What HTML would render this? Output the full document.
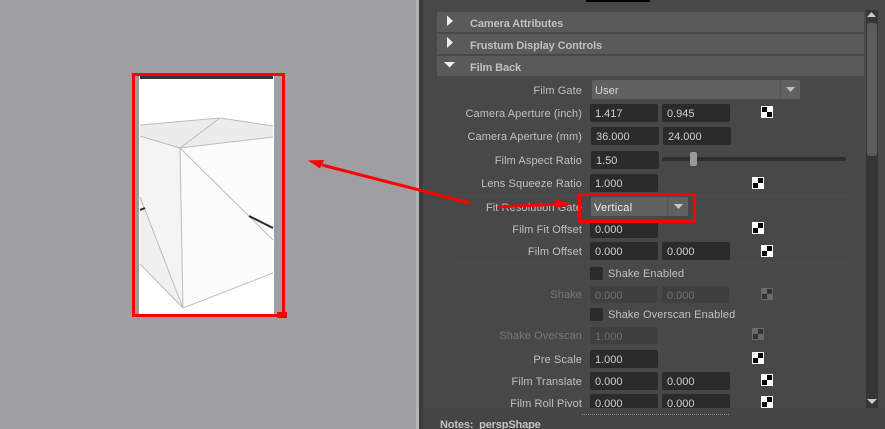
<!DOCTYPE html>
<html><head><meta charset="utf-8"><style>
html,body{margin:0;padding:0;background:#9f9fa1}
#r{position:relative;width:885px;height:429px;overflow:hidden;background:#9f9fa1;font-family:"Liberation Sans",sans-serif;font-size:11px;color:#c4c4c4;filter:blur(.3px)}
#r div{position:absolute;box-sizing:border-box}
.b{left:437px;width:427px;height:20px;background:#5a5a5a;font-weight:bold;line-height:24px;padding-left:33px;color:#c0c0c0;letter-spacing:-.1px}
.l{width:160px;left:422px;text-align:right;height:16px;line-height:18px;letter-spacing:.1px;white-space:nowrap;color:#c0c0c0}
.f{height:18px;width:68px;background:#2b2b2b;border-radius:2px;line-height:21px;padding-left:5px;color:#d0d0d0;letter-spacing:0}
.d{background:#3f3f3f;color:#707070}
.s{height:1px;left:450px;width:400px;background:#4c4c4c}
.c{width:13px;height:13px;background:#2b2b2b;border-radius:2px;left:590px}
.t{left:608px;height:16px;line-height:17px;letter-spacing:.12px;color:#c0c0c0;white-space:nowrap}
</style></head><body><div id="r">
<div style="left:0;top:78px;width:416px;height:1px;background:#a2a2a4"></div>
<div style="left:416px;top:0;width:3px;height:429px;background:#b4b4b4"></div>
<div style="left:419px;top:0;width:466px;height:429px;background:#454545"></div>
<div style="left:419px;top:0;width:4px;height:429px;background:#3c3c3c"></div>
<div style="left:423px;top:0;width:462px;height:429px;background:#484848"></div>
<div style="left:586px;top:0;width:64px;height:2px;background:#000"></div>

<div class="b" style="top:12px">Camera Attributes</div>
<div class="b" style="top:34px">Frustum Display Controls</div>
<div class="b" style="top:56px">Film Back</div>
<svg style="position:absolute;left:0;top:0" width="885" height="429">
<path d="M447 15.500L453 21 447 26z" fill="#eee"/>
<path d="M447 37L453 42.500 447 48z" fill="#eee"/>
<path d="M444 62H455L449.500 67.500z" fill="#eee"/>
</svg>

<div class="l" style="top:82px">Film Gate</div>
<div style="left:592px;top:80px;width:208px;height:19px;background:#616161;border-radius:2px;line-height:23px;padding-left:3px;letter-spacing:.1px;color:#d8d8d8">User</div>
<div style="left:780px;top:80px;width:1px;height:19px;background:#565656"></div>

<div class="l" style="top:105px">Camera Aperture (inch)</div>
<div class="f" style="left:590px;top:104px">1.417</div><div class="f" style="left:662px;top:104px">0.945</div>
<div class="l" style="top:128px">Camera Aperture (mm)</div>
<div class="f" style="left:591px;top:127px">36.000</div><div class="f" style="left:663px;top:127px">24.000</div>
<div class="l" style="top:152px">Film Aspect Ratio</div>
<div class="f" style="left:591px;top:151px">1.50</div>
<div style="left:662px;top:157px;width:184px;height:4px;background:#2e2e2e;border-radius:2px"></div>
<div style="left:690px;top:152px;width:7px;height:14px;background:#9a9a9a;border-radius:2px"></div>
<div class="l" style="top:175px">Lens Squeeze Ratio</div>
<div class="f" style="left:590px;top:174px">1.000</div>
<div class="s" style="top:195px"></div>
<div class="l" style="top:199px">Fit Resolution Gate</div>
<div style="left:591px;top:197px;width:97px;height:19px;background:#616161;border-radius:1px;line-height:23px;padding-left:3px;letter-spacing:.3px;color:#f0f0f0">Vertical</div>
<div style="left:667px;top:197px;width:1px;height:19px;background:#565656"></div>
<div class="l" style="top:221px">Film Fit Offset</div>
<div class="f" style="left:590px;top:220px">0.000</div>
<div class="l" style="top:243px">Film Offset</div>
<div class="f" style="left:590px;top:242px">0.000</div><div class="f" style="left:662px;top:242px">0.000</div>
<div class="s" style="top:262px"></div>
<div class="c" style="top:267px"></div><div class="t" style="top:266px">Shake Enabled</div>
<div class="l" style="top:286px;color:#787878">Shake</div>
<div class="f d" style="left:590px;top:286px;height:17px;width:67px">0.000</div><div class="f d" style="left:662px;top:286px;height:17px;width:67px">0.000</div>
<div class="c" style="top:308px"></div><div class="t" style="top:307px">Shake Overscan Enabled</div>
<div class="l" style="top:327px;color:#787878">Shake Overscan</div>
<div class="f d" style="left:590px;top:327px;height:17px">1.000</div>
<div class="s" style="top:346px"></div>
<div class="l" style="top:351px">Pre Scale</div>
<div class="f" style="left:590px;top:350px">1.000</div>
<div class="l" style="top:373px">Film Translate</div>
<div class="f" style="left:590px;top:372px">0.000</div><div class="f" style="left:662px;top:372px">0.000</div>
<div class="l" style="top:395px">Film Roll Pivot</div>
<div class="f" style="left:590px;top:394px;height:14px;border-radius:2px 2px 0 0">0.000</div><div class="f" style="left:662px;top:394px;height:14px;border-radius:2px 2px 0 0">0.000</div>

<div style="left:423px;top:408px;width:462px;height:21px;background:#454545"></div>
<div style="left:582px;top:414px;width:147px;height:1px;border-top:1px dotted #8a8a8a"></div>
<div style="left:440px;top:418px;height:14px;line-height:15px;font-weight:bold;letter-spacing:-.15px;white-space:nowrap;color:#c4c4c4">Notes:&nbsp; perspShape</div>

<div style="left:866px;top:10px;width:12px;height:398px;background:#363636"></div>
<div style="left:867px;top:23px;width:10px;height:133px;background:#5c5c5c;border-radius:3px"></div>

<div style="left:136px;top:76px;width:3px;height:240px;background:#9a9a9c"></div>
<svg style="position:absolute;left:0;top:0" width="885" height="429">
<path d="M786 87H795L790.500 92z" fill="#c0c0c0"/>
<path d="M674 204H683L678.500 209z" fill="#c8c8c8"/>
<path d="M867 17L871.500 12 876 17z" fill="#ccc"/>
<path d="M867 399H877L872 404z" fill="#ccc"/>
<g shape-rendering="crispEdges">
<rect x="761" y="106" width="12" height="12" fill="#fff"/><rect x="762" y="107" width="5" height="5" fill="#000"/><rect x="767" y="112" width="5" height="5" fill="#000"/>
<rect x="752" y="177" width="12" height="12" fill="#fff"/><rect x="758" y="178" width="5" height="5" fill="#000"/><rect x="753" y="183" width="5" height="5" fill="#000"/>
<rect x="752" y="222" width="12" height="12" fill="#fff"/><rect x="758" y="223" width="5" height="5" fill="#000"/><rect x="753" y="228" width="5" height="5" fill="#000"/>
<rect x="761" y="245" width="12" height="12" fill="#fff"/><rect x="767" y="246" width="5" height="5" fill="#000"/><rect x="762" y="251" width="5" height="5" fill="#000"/>
<rect x="761" y="288" width="12" height="12" fill="#6a6a6a"/><rect x="767" y="289" width="5" height="5" fill="#333"/><rect x="762" y="294" width="5" height="5" fill="#333"/>
<rect x="752" y="328" width="12" height="12" fill="#6a6a6a"/><rect x="758" y="329" width="5" height="5" fill="#333"/><rect x="753" y="334" width="5" height="5" fill="#333"/>
<rect x="752" y="352" width="12" height="12" fill="#fff"/><rect x="758" y="353" width="5" height="5" fill="#000"/><rect x="753" y="358" width="5" height="5" fill="#000"/>
<rect x="761" y="374" width="12" height="12" fill="#fff"/><rect x="767" y="375" width="5" height="5" fill="#000"/><rect x="762" y="380" width="5" height="5" fill="#000"/>
<rect x="761" y="396" width="12" height="12" fill="#fff"/><rect x="767" y="397" width="5" height="5" fill="#000"/><rect x="762" y="402" width="5" height="5" fill="#000"/>
</g>

<rect x="139" y="76" width="135" height="240" fill="#fff"/>
<rect x="140" y="76" width="133" height="3" fill="#333"/>
<path d="M140 125L220 118 273 126V137L180 148 140 136z" fill="#ececec"/>
<path d="M140 136L180 148 183 308 140 264z" fill="#f4f4f4"/>
<path d="M180 148L273 137V273L183 308z" fill="#fcfcfc"/>
<path d="M140 197L183 308 140 264z" fill="#f0f0f0"/>
<g fill="none" stroke="#bcbcbc" stroke-width="1">
<path d="M140 125L220 118 273 126"/><path d="M140 136L180 148 273 137"/><path d="M180 148L220 118"/>
<path d="M180 148L183 308"/><path d="M140 264L183 308 273 273"/><path d="M140 197L183 308"/><path d="M180 148L273 240"/>
</g>
<path d="M249 216L273 228" stroke="#2a2a2a" stroke-width="2" fill="none"/>
<path d="M140 210L145 208" stroke="#2a2a2a" stroke-width="2" fill="none"/>

<g fill="none" stroke="#f00">
<rect x="133.500" y="74.500" width="150" height="241" stroke-width="3"/>
<rect x="579.500" y="194.500" width="115" height="27" stroke-width="3"/>
<path d="M470 203L322 165" stroke-width="3"/>
<path d="M498 207L560 204" stroke-width="3"/>
</g>
<path d="M308 160.500L324 160 320 168.500z" fill="#f00"/>
<path d="M555 199L572 204 556 208z" fill="#f00"/>
<rect x="277" y="312" width="10" height="6" fill="#f00"/>
</svg>
</div></body></html>
